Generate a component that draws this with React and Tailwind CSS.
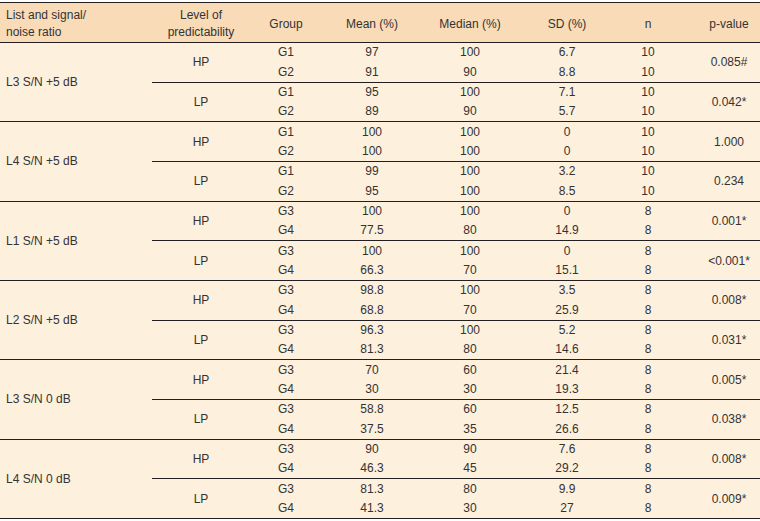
import React from "react";

const blocks = [
  {
    label: "L3 S/N +5 dB",
    subs: [
      { level: "HP", p: "0.085#", rows: [["G1", "97", "100", "6.7", "10"], ["G2", "91", "90", "8.8", "10"]] },
      { level: "LP", p: "0.042*", rows: [["G1", "95", "100", "7.1", "10"], ["G2", "89", "90", "5.7", "10"]] },
    ],
  },
  {
    label: "L4 S/N +5 dB",
    subs: [
      { level: "HP", p: "1.000", rows: [["G1", "100", "100", "0", "10"], ["G2", "100", "100", "0", "10"]] },
      { level: "LP", p: "0.234", rows: [["G1", "99", "100", "3.2", "10"], ["G2", "95", "100", "8.5", "10"]] },
    ],
  },
  {
    label: "L1 S/N +5 dB",
    subs: [
      { level: "HP", p: "0.001*", rows: [["G3", "100", "100", "0", "8"], ["G4", "77.5", "80", "14.9", "8"]] },
      { level: "LP", p: "<0.001*", rows: [["G3", "100", "100", "0", "8"], ["G4", "66.3", "70", "15.1", "8"]] },
    ],
  },
  {
    label: "L2 S/N +5 dB",
    subs: [
      { level: "HP", p: "0.008*", rows: [["G3", "98.8", "100", "3.5", "8"], ["G4", "68.8", "70", "25.9", "8"]] },
      { level: "LP", p: "0.031*", rows: [["G3", "96.3", "100", "5.2", "8"], ["G4", "81.3", "80", "14.6", "8"]] },
    ],
  },
  {
    label: "L3 S/N 0 dB",
    subs: [
      { level: "HP", p: "0.005*", rows: [["G3", "70", "60", "21.4", "8"], ["G4", "30", "30", "19.3", "8"]] },
      { level: "LP", p: "0.038*", rows: [["G3", "58.8", "60", "12.5", "8"], ["G4", "37.5", "35", "26.6", "8"]] },
    ],
  },
  {
    label: "L4 S/N 0 dB",
    subs: [
      { level: "HP", p: "0.008*", rows: [["G3", "90", "90", "7.6", "8"], ["G4", "46.3", "45", "29.2", "8"]] },
      { level: "LP", p: "0.009*", rows: [["G3", "81.3", "80", "9.9", "8"], ["G4", "41.3", "30", "27", "8"]] },
    ],
  },
];

const line = "border-t border-[#231f20]";

export default function App() {
  const cells = [];
  blocks.forEach((b, bi) => {
    b.subs.forEach((s, si) => {
      s.rows.forEach((r, ri) => {
        const top = ri === 0;
        const key = `${bi}-${si}-${ri}`;
        if (si === 0 && ri === 0) {
          cells.push(
            <div key={key + "l"} className={`row-span-4 flex items-center pl-[6px] ${line}`}>
              {b.label}
            </div>
          );
        }
        if (top) {
          cells.push(
            <div key={key + "v"} className={`row-span-2 flex items-center justify-center ${line}`}>
              {s.level}
            </div>
          );
        }
        r.forEach((v, ci) => {
          cells.push(
            <div key={key + "c" + ci} className={`flex items-center justify-center ${top ? line : ""}`}>
              {v}
            </div>
          );
        });
        if (top) {
          cells.push(
            <div key={key + "p"} className={`row-span-2 flex items-center justify-center pl-[18px] ${line}`}>
              {s.p}
            </div>
          );
        }
      });
    });
  });

  return (
    <div className="w-[760px] h-[521px] bg-white pt-[2px] font-['Liberation_Sans',Arial,sans-serif] text-[12px] text-[#333]">
      <div className="border-t border-b border-[#231f20] bg-[#fdf0dd]">
        <div className="grid grid-cols-[152px_98px_72px_100px_96px_98px_64px_80px] grid-rows-[39px_repeat(24,19.83px)]">
          <div className="bg-[#f9dbb8] flex items-center pl-[6px] pt-[3px] leading-[17px]">
            List and signal/
            <br />
            noise ratio
          </div>
          <div className="bg-[#f9dbb8] flex items-center justify-center pt-[3px] text-center leading-[17px]">
            Level of
            <br />
            predictability
          </div>
          <div className="bg-[#f9dbb8] flex items-center justify-center pt-[2px]">Group</div>
          <div className="bg-[#f9dbb8] flex items-center justify-center pt-[2px]">Mean (%)</div>
          <div className="bg-[#f9dbb8] flex items-center justify-center pt-[2px]">Median (%)</div>
          <div className="bg-[#f9dbb8] flex items-center justify-center pt-[2px]">SD (%)</div>
          <div className="bg-[#f9dbb8] flex items-center justify-center pt-[2px]">n</div>
          <div className="bg-[#f9dbb8] flex items-center justify-center pt-[2px] pl-[18px]">p-value</div>
          {cells}
        </div>
      </div>
    </div>
  );
}
